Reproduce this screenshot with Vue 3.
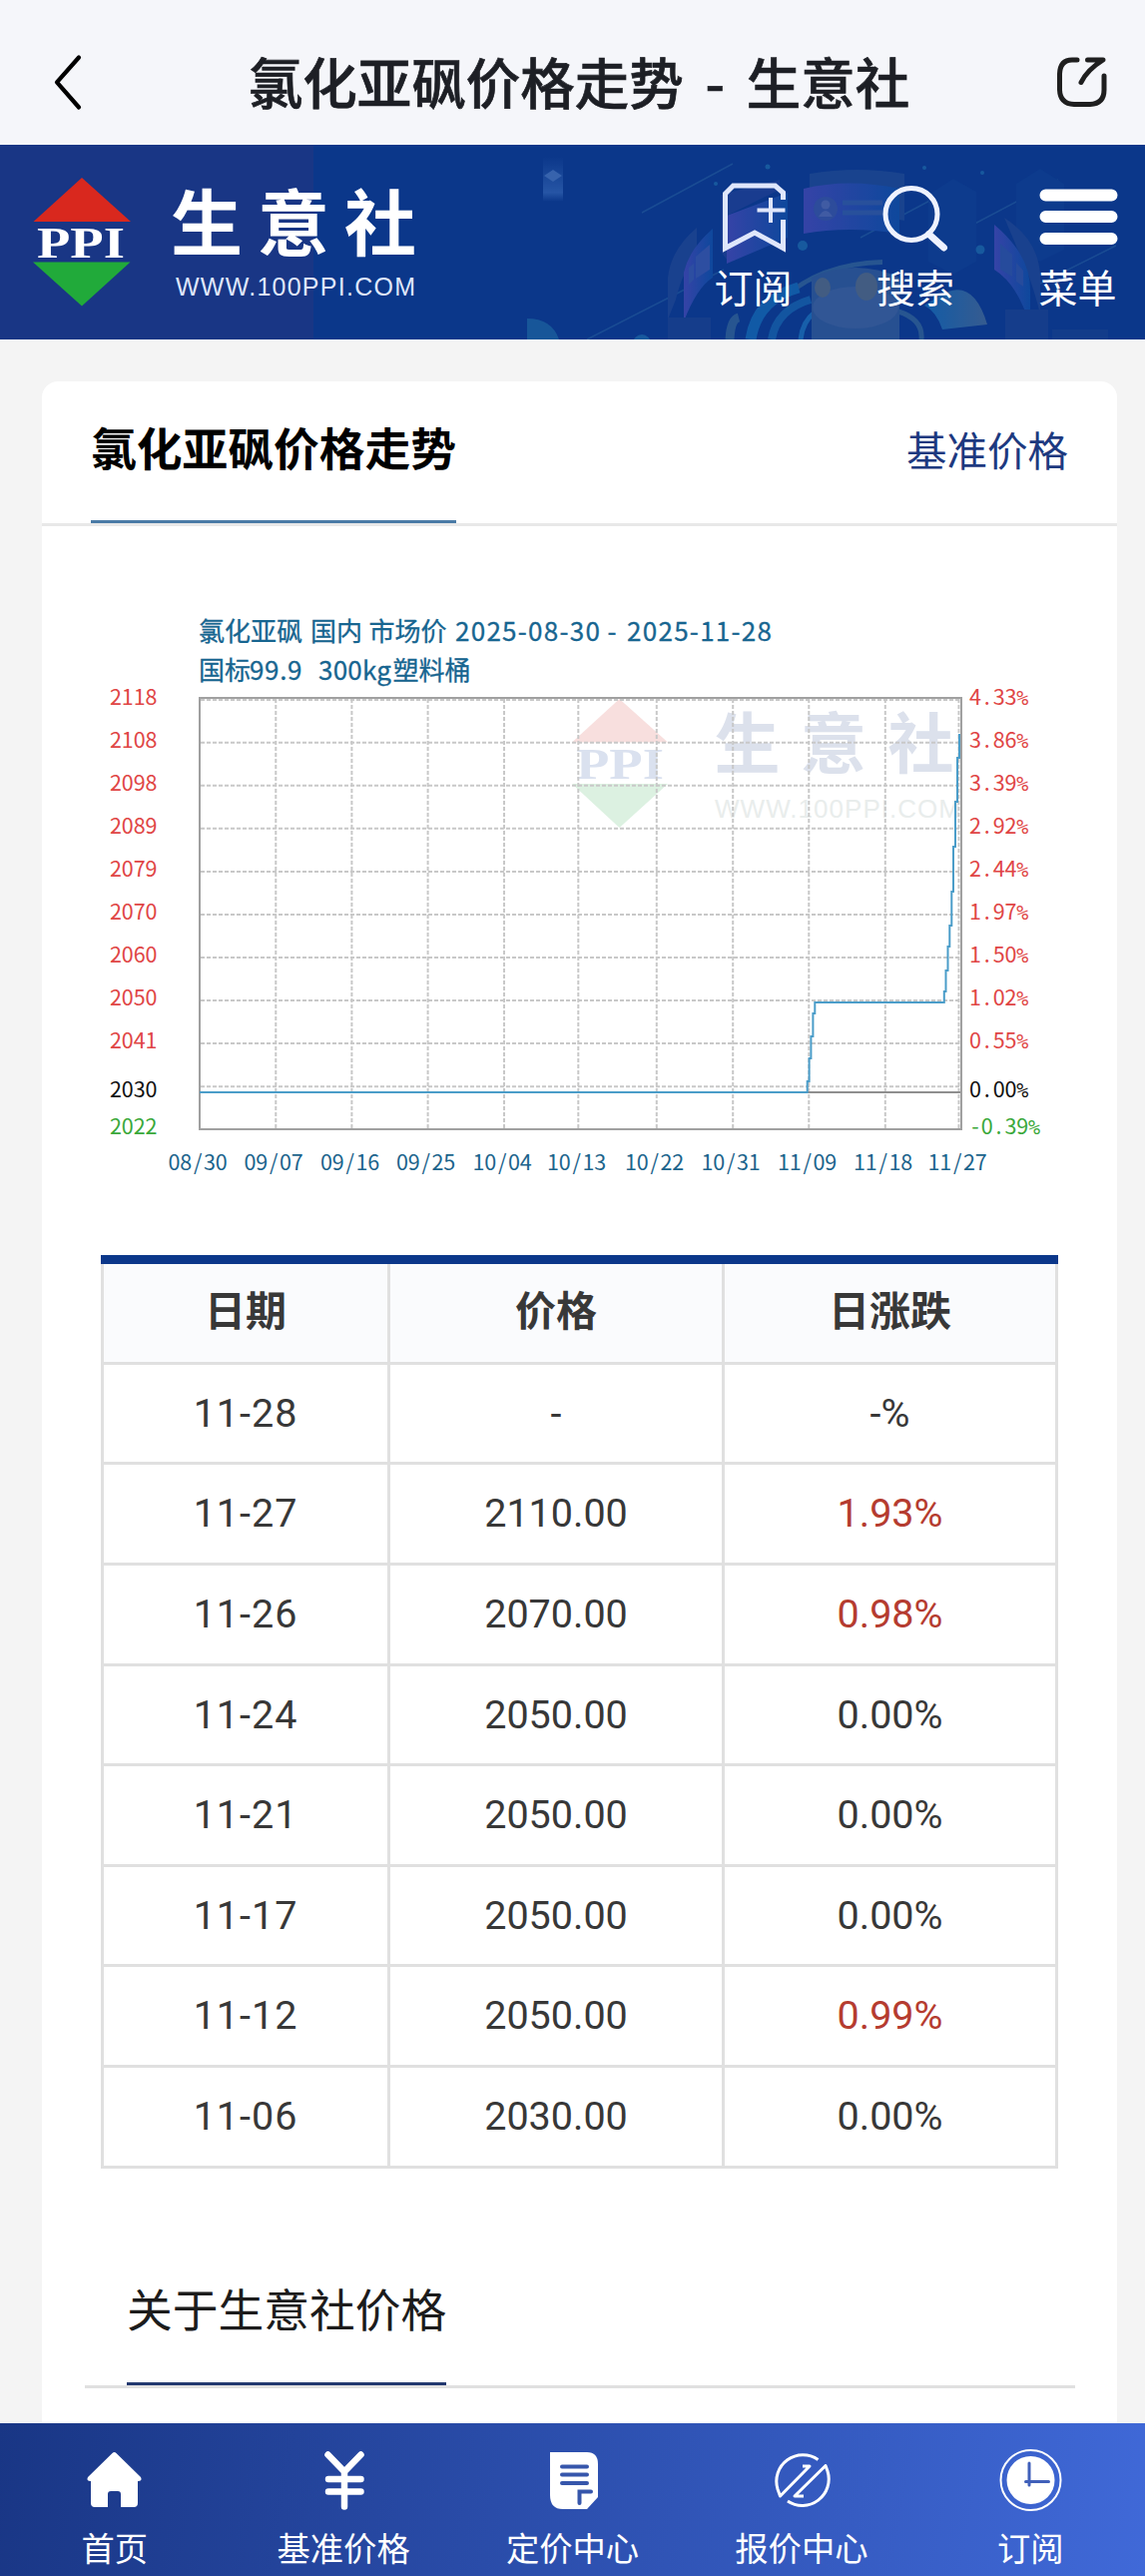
<template>
    <div class="page">
        <div class="titlebar">
            <svg class="back" viewBox="50 50 36 64" fill="none">
                <path d="M79 57.5L57 82.3L79 107.5" stroke="#000" stroke-width="4.2" stroke-linecap="round" stroke-linejoin="round" />
            </svg>
            <h1>氯化亚砜价格走势 - 生意社</h1>
            <svg class="share" viewBox="1056 54 56 56" fill="none" stroke="#1f1f1f" stroke-width="5" stroke-linecap="round" stroke-linejoin="round">
                <path d="M1079 60H1074Q1062 60 1061.500 74V90Q1062 104 1076 104.500H1092Q1106 104 1106 90V76" />
                <path d="M1089.500 60H1105Q1089 70 1083 82.500" />
            </svg>
        </div>

        <div class="banner">
            <!-- 背景装饰 -->
            <svg class="decor" viewBox="0 145 1147 195">
                <defs>
                    <linearGradient id="panel" x1="0" y1="0" x2="1" y2="0">
                        <stop offset="0" stop-color="#3d46ac" />
                        <stop offset="1" stop-color="#0f4ba0" />
                    </linearGradient>
                    <linearGradient id="glow" x1="0" y1="0" x2="0" y2="1">
                        <stop offset="0" stop-color="#2f5fae" stop-opacity="0" />
                        <stop offset="0.800" stop-color="#2f5fae" stop-opacity="0.900" />
                        <stop offset="1" stop-color="#2f5fae" stop-opacity="0" />
                    </linearGradient>
                    <linearGradient id="ring" x1="0" y1="0" x2="1" y2="0">
                        <stop offset="0" stop-color="#1463ad" />
                        <stop offset="1" stop-color="#3e6291" />
                    </linearGradient>
                </defs>
                <rect x="544" y="156" width="20" height="46" fill="url(#glow)" />
                <path d="M545 176L554 170L563 176L554 182Z" fill="#3f6bb4" />
                <path d="M528 319Q553 319 560 340H528Z" fill="#1a5c9c" />
                <g stroke="#1d5096" stroke-width="1.500">
                    <path d="M643 213L734 164M588 340L725 270M862 238L952 190M967 229L1060 180M1040 285L1118 246" />
                </g>
                <g fill="#0e3c8e">
                    <path d="M930 195L955 179L978 192V262L955 275L930 262Z" />
                    <path d="M1018 184L1042 169L1066 184V250L1042 262L1018 250Z" />
                </g>
                <path d="M811 174Q858 166 906 174V221L889 218V190H811Z" fill="#1c468f" />
                <path d="M805 189Q850 178 901 189V234Q850 226 805 234Z" fill="url(#panel)" />
                <circle cx="827" cy="209" r="12" fill="#34509f" />
                <circle cx="827" cy="205" r="4.500" fill="#4a62a8" />
                <path d="M820 217Q827 205 834 217Z" fill="#4a62a8" />
                <path d="M844 203H884M844 213H884" stroke="#2e559f" stroke-width="5" />
                <path d="M722 195L781 180V190L728 216V260L722 252Z" fill="#1c3e90" />
                <path d="M728 216L789 193V238L728 264Z" fill="url(#panel)" />
                <path d="M669 320V278Q672 250 698 228V258Q684 270 677 300Z" fill="#1c438f" />
                <path d="M685 322V273Q690 250 714 229V278Q698 288 685 322Z" fill="url(#panel)" />
                <path d="M697 257L711 245V270L697 279ZM690 268L695 264V280L690 285Z" fill="#3453a6" />
                <path d="M1006 218Q1040 240 1042 275V315Q1036 290 1028 270Z" fill="#1c438f" />
                <path d="M996 225Q1032 255 1032 290V327Q1020 285 996 270Z" fill="url(#panel)" />
                <path d="M1002 244L1014 255V277L1002 270ZM1018 263L1025 271V287L1018 282Z" fill="#2b4fa0" />
                <rect x="669" y="318" width="43" height="22" fill="#173f8c" />
                <rect x="1007" y="310" width="43" height="30" fill="#173f8c" />
                <rect x="1054" y="330" width="56" height="10" fill="#143d8b" />
                <path d="M940 297Q974 275 989 325L944 330Q938 312 926 306Z" fill="url(#ring)" />
                <g fill="none">
                    <path d="M782 298Q820 262 884 260V265Q826 266 789 298Z" fill="#2d5b92" />
                    <path d="M752 340Q758 300 800 288" stroke="#1361ac" stroke-width="11" />
                    <path d="M773 340Q778 310 812 300" stroke="#155ba5" stroke-width="8" />
                    <path d="M802 340Q804 322 816 313" stroke="#1a67b0" stroke-width="5" />
                    <path d="M731 340Q732 320 740 318" stroke="#2d5b92" stroke-width="9" />
                    <path d="M900 312Q925 320 923 340" stroke="#2d5b92" stroke-width="5" />
                </g>
                <path d="M813 340V278Q857 258 901 278V340Z" fill="#2d5593" />
                <ellipse cx="857" cy="308" rx="43" ry="21" fill="#385c98" />
                <ellipse cx="824" cy="288" rx="8" ry="10" fill="#4c6381" />
                <ellipse cx="868" cy="287" rx="11" ry="14" fill="#4c6381" />
                <g fill="#1a60a2">
                    <circle cx="804" cy="246" r="5" />
                    <circle cx="982" cy="250" r="4.500" />
                    <circle cx="769" cy="167" r="2.500" />
                    <circle cx="717" cy="184" r="2" />
                    <circle cx="984" cy="173" r="2" />
                    <circle cx="926" cy="168" r="2" />
                    <circle cx="643" cy="344" r="9" />
                </g>
            </svg>

            <svg class="logo" viewBox="0 145 420 195">
                <rect x="0" y="145" width="314" height="195" fill="#193685" />
                <path d="M82 178L131 222H33.500Z" fill="#d9281e" />
                <path d="M33 262.500H130.500L82 306.500Z" fill="#21aa3a" />
                <text class="ppi" x="37" y="258" textLength="88" lengthAdjust="spacingAndGlyphs" fill="#fff">PPI</text>
                <text class="brand" x="207 294 381" y="249.500" font-size="72" fill="#fff">生意社</text>
                <text class="site" x="176" y="296" textLength="240" font-size="25" fill="#dfe6fb">WWW.100PPI.COM</text>
            </svg>

            <div class="tools">
                <div class="tool">
                    <svg viewBox="714.5 178 80 80" fill="none" stroke="#dfe6fb" stroke-width="5">
                        <path d="M784 200V193L776 186H734L726 194V248.500L755.500 233L784 248.500V220" />
                        <path d="M758 210.500H786M771.500 198V223" stroke-width="4" />
                    </svg>
                    <span>订阅</span>
                </div>
                <div class="tool">
                    <svg viewBox="876.5 178 80 80" fill="none" stroke="#eef2ff">
                        <circle cx="912.5" cy="214.5" r="26" stroke-width="5" />
                        <path d="M930 234.500L945 248" stroke-width="7" stroke-linecap="round" />
                    </svg>
                    <span>搜索</span>
                </div>
                <div class="tool">
                    <svg viewBox="1039.5 178 80 80" fill="none" stroke="#fff" stroke-width="12" stroke-linecap="round">
                        <path d="M1047 195.500H1113M1047 217H1113M1047 239H1113" />
                    </svg>
                    <span>菜单</span>
                </div>
            </div>
        </div>

        <div class="main">
            <div class="card">
                <div class="card-head">
                    <h2>氯化亚砜价格走势</h2>
                    <a class="more">基准价格</a>
                </div>

                <svg class="chart" viewBox="42 527 1077 730">
                    <g class="caption">
                        <text y="642"><tspan x="199">氯化亚砜 </tspan><tspan x="311">国内 </tspan><tspan x="369.5">市场价 </tspan><tspan x="456" textLength="152">2025-08-30 </tspan><tspan x="608.5">- </tspan><tspan x="628" textLength="145">2025-11-28</tspan></text>
                        <text y="681"><tspan x="199">国标</tspan><tspan x="250" textLength="59">99.9 </tspan><tspan x="319" textLength="73">300kg</tspan><tspan x="393.5">塑料桶</tspan></text>
                    </g>

                    <clipPath id="plot">
                        <rect x="200" y="699" width="761" height="433" />
                    </clipPath>
                    <g clip-path="url(#plot)">
                        <path d="M620.500 700L669 743.500H573Z" fill="#f8dfde" />
                        <path d="M573 785H669L620.500 829Z" fill="#dcf1e1" />
                        <text class="ppi" x="577" y="780" textLength="88" lengthAdjust="spacingAndGlyphs" fill="#dae1ef">PPI</text>
                        <text class="brand" x="748.5 835 922.5" y="769" font-size="66" fill="#dce1ec">生意社</text>
                        <text class="site" x="716" y="819" textLength="246" font-size="26" fill="#e9edec">WWW.100PPI.COM</text>
                    </g>

                    <g class="grid">
                        <line v-for="x in gridX" :key="'x' + x" :x1="x" :x2="x" y1="700" y2="1130" />
                        <line v-for="y in gridY" :key="'y' + y" x1="201" x2="962" :y1="y" :y2="y" />
                    </g>
                    <path d="M200 1094H963" stroke="#8f8f8f" stroke-width="2" />
                    <rect x="200" y="699" width="763" height="432" fill="none" stroke="#a0a0a0" stroke-width="2" />
                    <polyline :points="trend" fill="none" stroke="#4b9dc9" stroke-width="2" />

                    <g v-for="row in scale" :key="row.price" class="tick" :class="row.tone">
                        <text :x="cells(116, 4)" :y="row.y">{{ row.price }}</text>
                        <text :x="cells(977, row.rate.length)" :y="row.y">{{ row.rate }}<tspan class="pct" :x="977 + row.rate.length * 11.8">%</tspan></text>
                    </g>
                    <g class="tick date">
                        <text v-for="d in dates" :key="d.label" :x="cells(d.x, 5)" y="1171.500">{{ d.label }}</text>
                    </g>
                </svg>

                <div class="table">
                    <div class="row head">
                        <div>日期</div>
                        <div>价格</div>
                        <div>日涨跌</div>
                    </div>
                    <div v-for="item in prices" :key="item.date" class="row">
                        <div class="day">{{ item.date }}</div>
                        <div>{{ item.price }}</div>
                        <div :class="{ up: item.up }">{{ item.change }}</div>
                    </div>
                </div>

                <div class="about">
                    <h3>关于生意社价格</h3>
                </div>
            </div>
        </div>

        <div class="tabbar">
            <div class="tab">
                <svg viewBox="0 0 64 64">
                    <path d="M29.500 5Q31.500 3 33.500 5L58 29Q60 33 55 33V55Q55 59 51 59H38V46Q38 43 35 43H28Q25 43 25 46V59H12Q8 59 8 55V33Q3 33 5 29Z" fill="#fff" />
                </svg>
                <span>首页</span>
            </div>
            <div class="tab">
                <svg viewBox="0 0 64 64" fill="none" stroke="#fff" stroke-width="6.500" stroke-linecap="round">
                    <path d="M16.500 6.500L33 23.500L49.500 6.500M33 24V58.500M17 31H49.500M17 43.500H49.500" />
                </svg>
                <span>基准价格</span>
            </div>
            <div class="tab">
                <svg viewBox="0 0 64 64">
                    <path d="M9 4H46Q57 4 57 16V49L46 61H22Q9 61 9 47Z" fill="#fff" />
                    <path d="M21 18.500H46M21 26.500H46M21 35H46M50 43.500H38.500V55" fill="none" stroke="#3656ab" stroke-width="4" stroke-linecap="round" />
                </svg>
                <span>定价中心</span>
            </div>
            <div class="tab">
                <svg viewBox="0 0 64 64" fill="none" stroke="#fff" stroke-width="3" stroke-linejoin="round">
                    <path d="M48.500 11.500A26.500 26.500 0 0 0 8 41L10.500 48L40 18H33" />
                    <path d="M18 53A26.500 26.500 0 0 0 58 23L56 17.500L25 48H34" />
                </svg>
                <span>报价中心</span>
            </div>
            <div class="tab">
                <svg viewBox="0 0 64 64" fill="none">
                    <circle cx="32.500" cy="32" r="30" stroke="#fff" stroke-width="2" />
                    <circle cx="32.500" cy="32" r="24" fill="#fff" />
                    <path d="M31 15V37M27.500 33.500H50.500" stroke="#4060ba" stroke-width="3" stroke-linecap="round" />
                </svg>
                <span>订阅</span>
            </div>
        </div>
    </div>
</template>

<script setup>
const gridX = [276.3, 352.4, 428.6, 505, 579.3, 657.8, 734.2, 810.3, 886.8, 960.5]
const gridY = [701, 743.7, 786.7, 829.7, 873, 916, 959, 1002, 1045, 1088.3]

// 左侧价格与右侧涨跌幅刻度
const scale = [
    { price: "2118", rate: "4.33", y: 706, tone: "up" },
    { price: "2108", rate: "3.86", y: 749, tone: "up" },
    { price: "2098", rate: "3.39", y: 792, tone: "up" },
    { price: "2089", rate: "2.92", y: 835, tone: "up" },
    { price: "2079", rate: "2.44", y: 878, tone: "up" },
    { price: "2070", rate: "1.97", y: 921, tone: "up" },
    { price: "2060", rate: "1.50", y: 964, tone: "up" },
    { price: "2050", rate: "1.02", y: 1007, tone: "up" },
    { price: "2041", rate: "0.55", y: 1050, tone: "up" },
    { price: "2030", rate: "0.00", y: 1099, tone: "base" },
    { price: "2022", rate: "-0.39", y: 1136, tone: "down" }
]

const dates = [
    { label: "08/30", x: 174.5 },
    { label: "09/07", x: 250.5 },
    { label: "09/16", x: 327 },
    { label: "09/25", x: 403 },
    { label: "10/04", x: 479.5 },
    { label: "10/13", x: 554 },
    { label: "10/22", x: 632 },
    { label: "10/31", x: 708.5 },
    { label: "11/09", x: 785 },
    { label: "11/18", x: 861 },
    { label: "11/27", x: 935.5 }
]

// 等宽排列每个字符
const cells = (start, count) =>
    Array.from({ length: count }, (_, i) => (start + i * 11.8).toFixed(1)).join(" ")

const trend = [
    "200,1094 808.700,1094 808.700,1083 810.600,1083 810.600,1060 812.400,1060",
    "812.400,1038 814.400,1038 814.400,1015 816.300,1015 816.300,1004 945.800,1004",
    "945.800,993 947.500,993 947.500,972 949.500,972 949.500,948 951.300,948",
    "951.300,927 953.300,927 953.300,893 955,893 955,848 957,848 957,803 959,803",
    "959,759 961,759 961,735"
].join(" ")

const prices = [
    { date: "11-28", price: "-", change: "-%" },
    { date: "11-27", price: "2110.00", change: "1.93%", up: true },
    { date: "11-26", price: "2070.00", change: "0.98%", up: true },
    { date: "11-24", price: "2050.00", change: "0.00%" },
    { date: "11-21", price: "2050.00", change: "0.00%" },
    { date: "11-17", price: "2050.00", change: "0.00%" },
    { date: "11-12", price: "2050.00", change: "0.99%", up: true },
    { date: "11-06", price: "2030.00", change: "0.00%" }
]
</script>

<style>
body {
    margin: 0;
    background: #f4f4f4;
}
</style>

<style scoped>
.page {
    width: 1147px;
    height: 2580px;
    display: flex;
    flex-direction: column;
    overflow: hidden;
    background: #f4f4f4;
    font-family: "Noto Sans CJK SC", "Noto Sans", sans-serif;
}

h1,
h2,
h3 {
    margin: 0;
}

.titlebar {
    height: 145px;
    flex: none;
    display: flex;
    align-items: center;
    justify-content: space-between;
    box-sizing: border-box;
    padding: 19px 35px 0 50px;
    background: #f5f6fa;
}

.titlebar h1 {
    font-size: 54.5px;
    font-weight: 500;
    line-height: 80px;
    word-spacing: 9.5px;
    color: #1d1f25;
    -webkit-text-stroke: 0.7px #1d1f25;
    margin-top: -2px;
    margin-left: 18px;
    white-space: nowrap;
}

.back {
    width: 36px;
    height: 64px;
}

.share {
    width: 56px;
    height: 56px;
}

.banner {
    position: relative;
    height: 195px;
    flex: none;
    display: flex;
    justify-content: space-between;
    background: #0b378a;
}

.decor {
    position: absolute;
    inset: 0;
    width: 1147px;
    height: 195px;
    opacity: 0.85;
}

.logo {
    position: relative;
    width: 420px;
    height: 195px;
}

.ppi {
    font-family: "Liberation Serif", serif;
    font-size: 44px;
    font-weight: 700;
}

.brand {
    font-family: "Noto Sans CJK SC", sans-serif;
    font-weight: 700;
    text-anchor: middle;
}

.site {
    font-family: "Liberation Sans", sans-serif;
}

.tools {
    position: relative;
    display: flex;
    gap: 82.5px;
    padding: 33px 27.5px 0 0;
}

.tool {
    width: 80px;
    display: flex;
    flex-direction: column;
    align-items: center;
    color: #fff;
    font-size: 39px;
    line-height: 56px;
}

.tool svg {
    width: 80px;
    height: 80px;
}

.main {
    flex: 1;
    min-height: 0;
    padding: 42px 28px 0 42px;
    overflow: hidden;
}

.card {
    height: 100%;
    background: #fff;
    border-radius: 16px 16px 0 0;
}

.card-head {
    height: 142px;
    display: flex;
    justify-content: space-between;
    border-bottom: 3px solid #e8e8e8;
    padding: 0 49px;
}

.card-head h2 {
    box-sizing: border-box;
    height: 142px;
    border-bottom: 3px solid #4a7ba6;
    font-size: 45.75px;
    font-weight: 700;
    line-height: 130px;
    color: #000;
}

.more {
    font-size: 40.5px;
    line-height: 136px;
    color: #1d397f;
}

.chart {
    display: block;
    width: 1077px;
    height: 730px;
}

.caption {
    font-size: 26px;
    fill: #176590;
    stroke: #176590;
    stroke-width: 0.3px;
}

.grid line {
    stroke: #c8c8c8;
    stroke-width: 2;
    stroke-dasharray: 4 2;
}

.tick {
    font-size: 21.5px;
    text-anchor: middle;
}

.tick.up {
    fill: #e04545;
}

.tick.base {
    fill: #111;
}

.tick.down {
    fill: #3aa83a;
}

.tick.date {
    fill: #1c648c;
}

.pct {
    font-family: "DejaVu Sans Mono", monospace;
    font-size: 20px;
}

.table {
    width: 959px;
    margin-left: 59px;
    box-sizing: border-box;
    border-top: 9px solid #0b378a;
}

.row {
    display: grid;
    grid-template-columns: 287px 335px 334px;
    height: 100.625px;
    box-sizing: border-box;
    border-left: 3px solid #e0e0e0;
    border-bottom: 3px solid #e0e0e0;
    font-family: Roboto, "Noto Sans CJK SC", sans-serif;
    font-size: 39.5px;
    line-height: 97px;
    text-align: center;
    color: #383838;
}

.row > div {
    border-right: 3px solid #e0e0e0;
}

.row.head {
    background: #fafbfd;
    font-family: "Noto Sans CJK SC", sans-serif;
    font-weight: 700;
    font-size: 41px;
    line-height: 89px;
}

.row .day {
    letter-spacing: 1px;
}

.row .up {
    color: #b53c30;
}

.about {
    height: 217px;
    margin: 0 42px 0 43px;
    padding-left: 42px;
    display: flex;
    border-bottom: 3px solid #e0e0e0;
}

.about h3 {
    box-sizing: border-box;
    height: 217px;
    border-bottom: 3px solid #22386f;
    padding-top: 72px;
    font-size: 45.75px;
    font-weight: 400;
    line-height: 134px;
    color: #1c1c1c;
}

.tabbar {
    flex: none;
    height: 153px;
    box-sizing: border-box;
    padding-top: 25px;
    display: flex;
    background: linear-gradient(100deg, #193685, #4069d8);
}

.tab {
    flex: 1;
    display: flex;
    flex-direction: column;
    align-items: center;
    color: #fff;
    font-size: 33.3px;
    line-height: 69px;
}

.tab svg {
    flex: none;
    width: 64px;
    height: 64px;
}
</style>
